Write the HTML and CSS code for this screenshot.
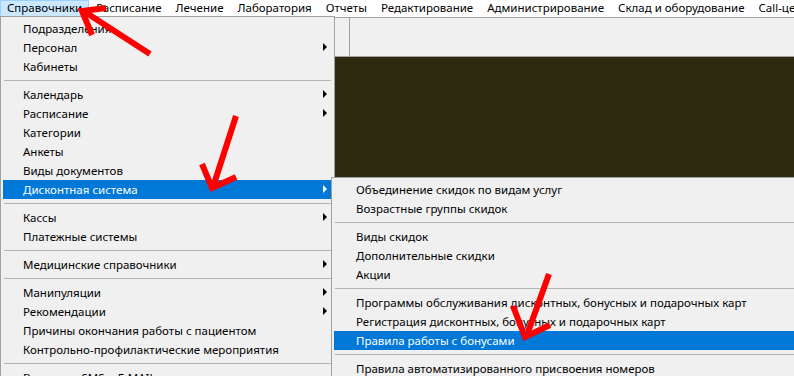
FILE: index.html
```html
<!DOCTYPE html>
<html lang="ru">
<head>
  <meta charset="UTF-8">
  <title>Справочники</title>
  <link rel="stylesheet" href="styles.css">
</head>
<body>
  <div class="window">
    <div class="menubar">
      <div class="menubar-item active">Справочники</div>
      <div class="menubar-item">Расписание</div>
      <div class="menubar-item">Лечение</div>
      <div class="menubar-item">Лаборатория</div>
      <div class="menubar-item">Отчеты</div>
      <div class="menubar-item">Редактирование</div>
      <div class="menubar-item">Администрирование</div>
      <div class="menubar-item">Склад и оборудование</div>
      <div class="menubar-item">Call-центр</div>
    </div>
    <div class="toolbar">
      <div class="toolbar-gap"></div>
      <div class="toolbar-panel"></div>
    </div>
    <div class="workspace"></div>
  </div>

  <!-- Dropdown: Справочники -->
  <div class="menu menu-main">
    <div class="menu-item">Подразделения</div>
    <div class="menu-item sub">Персонал</div>
    <div class="menu-item">Кабинеты</div>
    <div class="menu-sep"></div>
    <div class="menu-item sub">Календарь</div>
    <div class="menu-item sub">Расписание</div>
    <div class="menu-item">Категории</div>
    <div class="menu-item">Анкеты</div>
    <div class="menu-item">Виды документов</div>
    <div class="menu-item sub selected">Дисконтная система</div>
    <div class="menu-sep"></div>
    <div class="menu-item sub">Кассы</div>
    <div class="menu-item">Платежные системы</div>
    <div class="menu-sep"></div>
    <div class="menu-item sub">Медицинские справочники</div>
    <div class="menu-sep"></div>
    <div class="menu-item sub">Манипуляции</div>
    <div class="menu-item sub">Рекомендации</div>
    <div class="menu-item">Причины окончания работы с пациентом</div>
    <div class="menu-item">Контрольно-профилактические мероприятия</div>
    <div class="menu-sep"></div>
    <div class="menu-item">Варианты SMS и E-MAIL рассылок</div>
  </div>

  <!-- Submenu: Дисконтная система -->
  <div class="menu menu-sub">
    <div class="menu-item">Объединение скидок по видам услуг</div>
    <div class="menu-item">Возрастные группы скидок</div>
    <div class="menu-sep"></div>
    <div class="menu-item">Виды скидок</div>
    <div class="menu-item">Дополнительные скидки</div>
    <div class="menu-item">Акции</div>
    <div class="menu-sep"></div>
    <div class="menu-item">Программы обслуживания дисконтных, бонусных и подарочных карт</div>
    <div class="menu-item">Регистрация дисконтных, бонусных и подарочных карт</div>
    <div class="menu-item selected">Правила работы с бонусами</div>
    <div class="menu-sep"></div>
    <div class="menu-item">Правила автоматизированного присвоения номеров</div>
  </div>

  <!-- Red annotation arrows -->
  <svg class="marks" width="794" height="376" viewBox="0 0 794 376">
    <g stroke="#ff0000" stroke-width="6" fill="none" stroke-linejoin="miter">
      <line x1="150" y1="54" x2="85" y2="12"/>
      <polyline points="106,8 82,11 92,35"/>
      <line x1="236" y1="116" x2="214" y2="184"/>
      <polyline points="202,164 212,188 236,177"/>
      <line x1="549" y1="274" x2="528" y2="332"/>
      <polyline points="513,306 525,337 550,325"/>
    </g>
  </svg>
</body>
</html>
```

FILE: styles.css
```css
body {
  margin: 0;
  width: 794px;
  height: 376px;
  overflow: hidden;
  position: relative;
  font-family: 'Noto Sans', 'Open Sans', sans-serif;
  font-size: 11.5px;
  color: #000;
  background: #2d2a0f;
}

.window {
  display: flex;
  flex-direction: column;
  height: 100%;
}

/* Top menu bar */
.menubar {
  display: flex;
  height: 17px;
  background: #fff;
  border-bottom: 1px solid #a0a0a0;
  white-space: nowrap;
  overflow: hidden;
}

.menubar-item {
  padding: 0 7px;
  line-height: 15px;
}

.menubar-item.active {
  background: #cce8ff;
  box-shadow: inset 0 0 0 1px #99d1ff;
}

/* Toolbar strip */
.toolbar {
  display: flex;
  height: 38px;
  background: #f0f0f0;
  border-bottom: 1px solid #a0a0a0;
}

.toolbar-gap {
  width: 349px;
}

.toolbar-panel {
  flex: 1;
  border-left: 1px solid #a0a0a0;
}

.workspace {
  flex: 1;
  background: #2d2a0f;
}

/* Popup menus */
.menu {
  position: absolute;
  background: #f0f0f0;
  border: 1px solid #a0a0a0;
  padding: 2px;
  white-space: nowrap;
  box-sizing: border-box;
  overflow: hidden;
}

.menu-main {
  left: 0;
  top: 16px;
  width: 335px;
}

.menu-sub {
  left: 331px;
  top: 177px;
  width: 520px;
}

.menu-item {
  display: flex;
  align-items: center;
  height: 19px;
  box-sizing: border-box;
  padding: 0 5px 1px 20px;
}

.menu-sub .menu-item {
  padding-left: 22px;
}

.menu-item.sub::after {
  content: "";
  margin-left: auto;
  border-left: 4px solid #000;
  border-top: 4px solid transparent;
  border-bottom: 4px solid transparent;
}

.menu-item.selected {
  background: #0078d7;
  color: #fff;
}

.menu-item.selected.sub::after {
  border-left-color: #fff;
}

.menu-sep {
  height: 1px;
  margin: 4px 1px 4px 1px;
  background: #b4b4b4;
}

.marks {
  position: absolute;
  left: 0;
  top: 0;
  pointer-events: none;
}
```
